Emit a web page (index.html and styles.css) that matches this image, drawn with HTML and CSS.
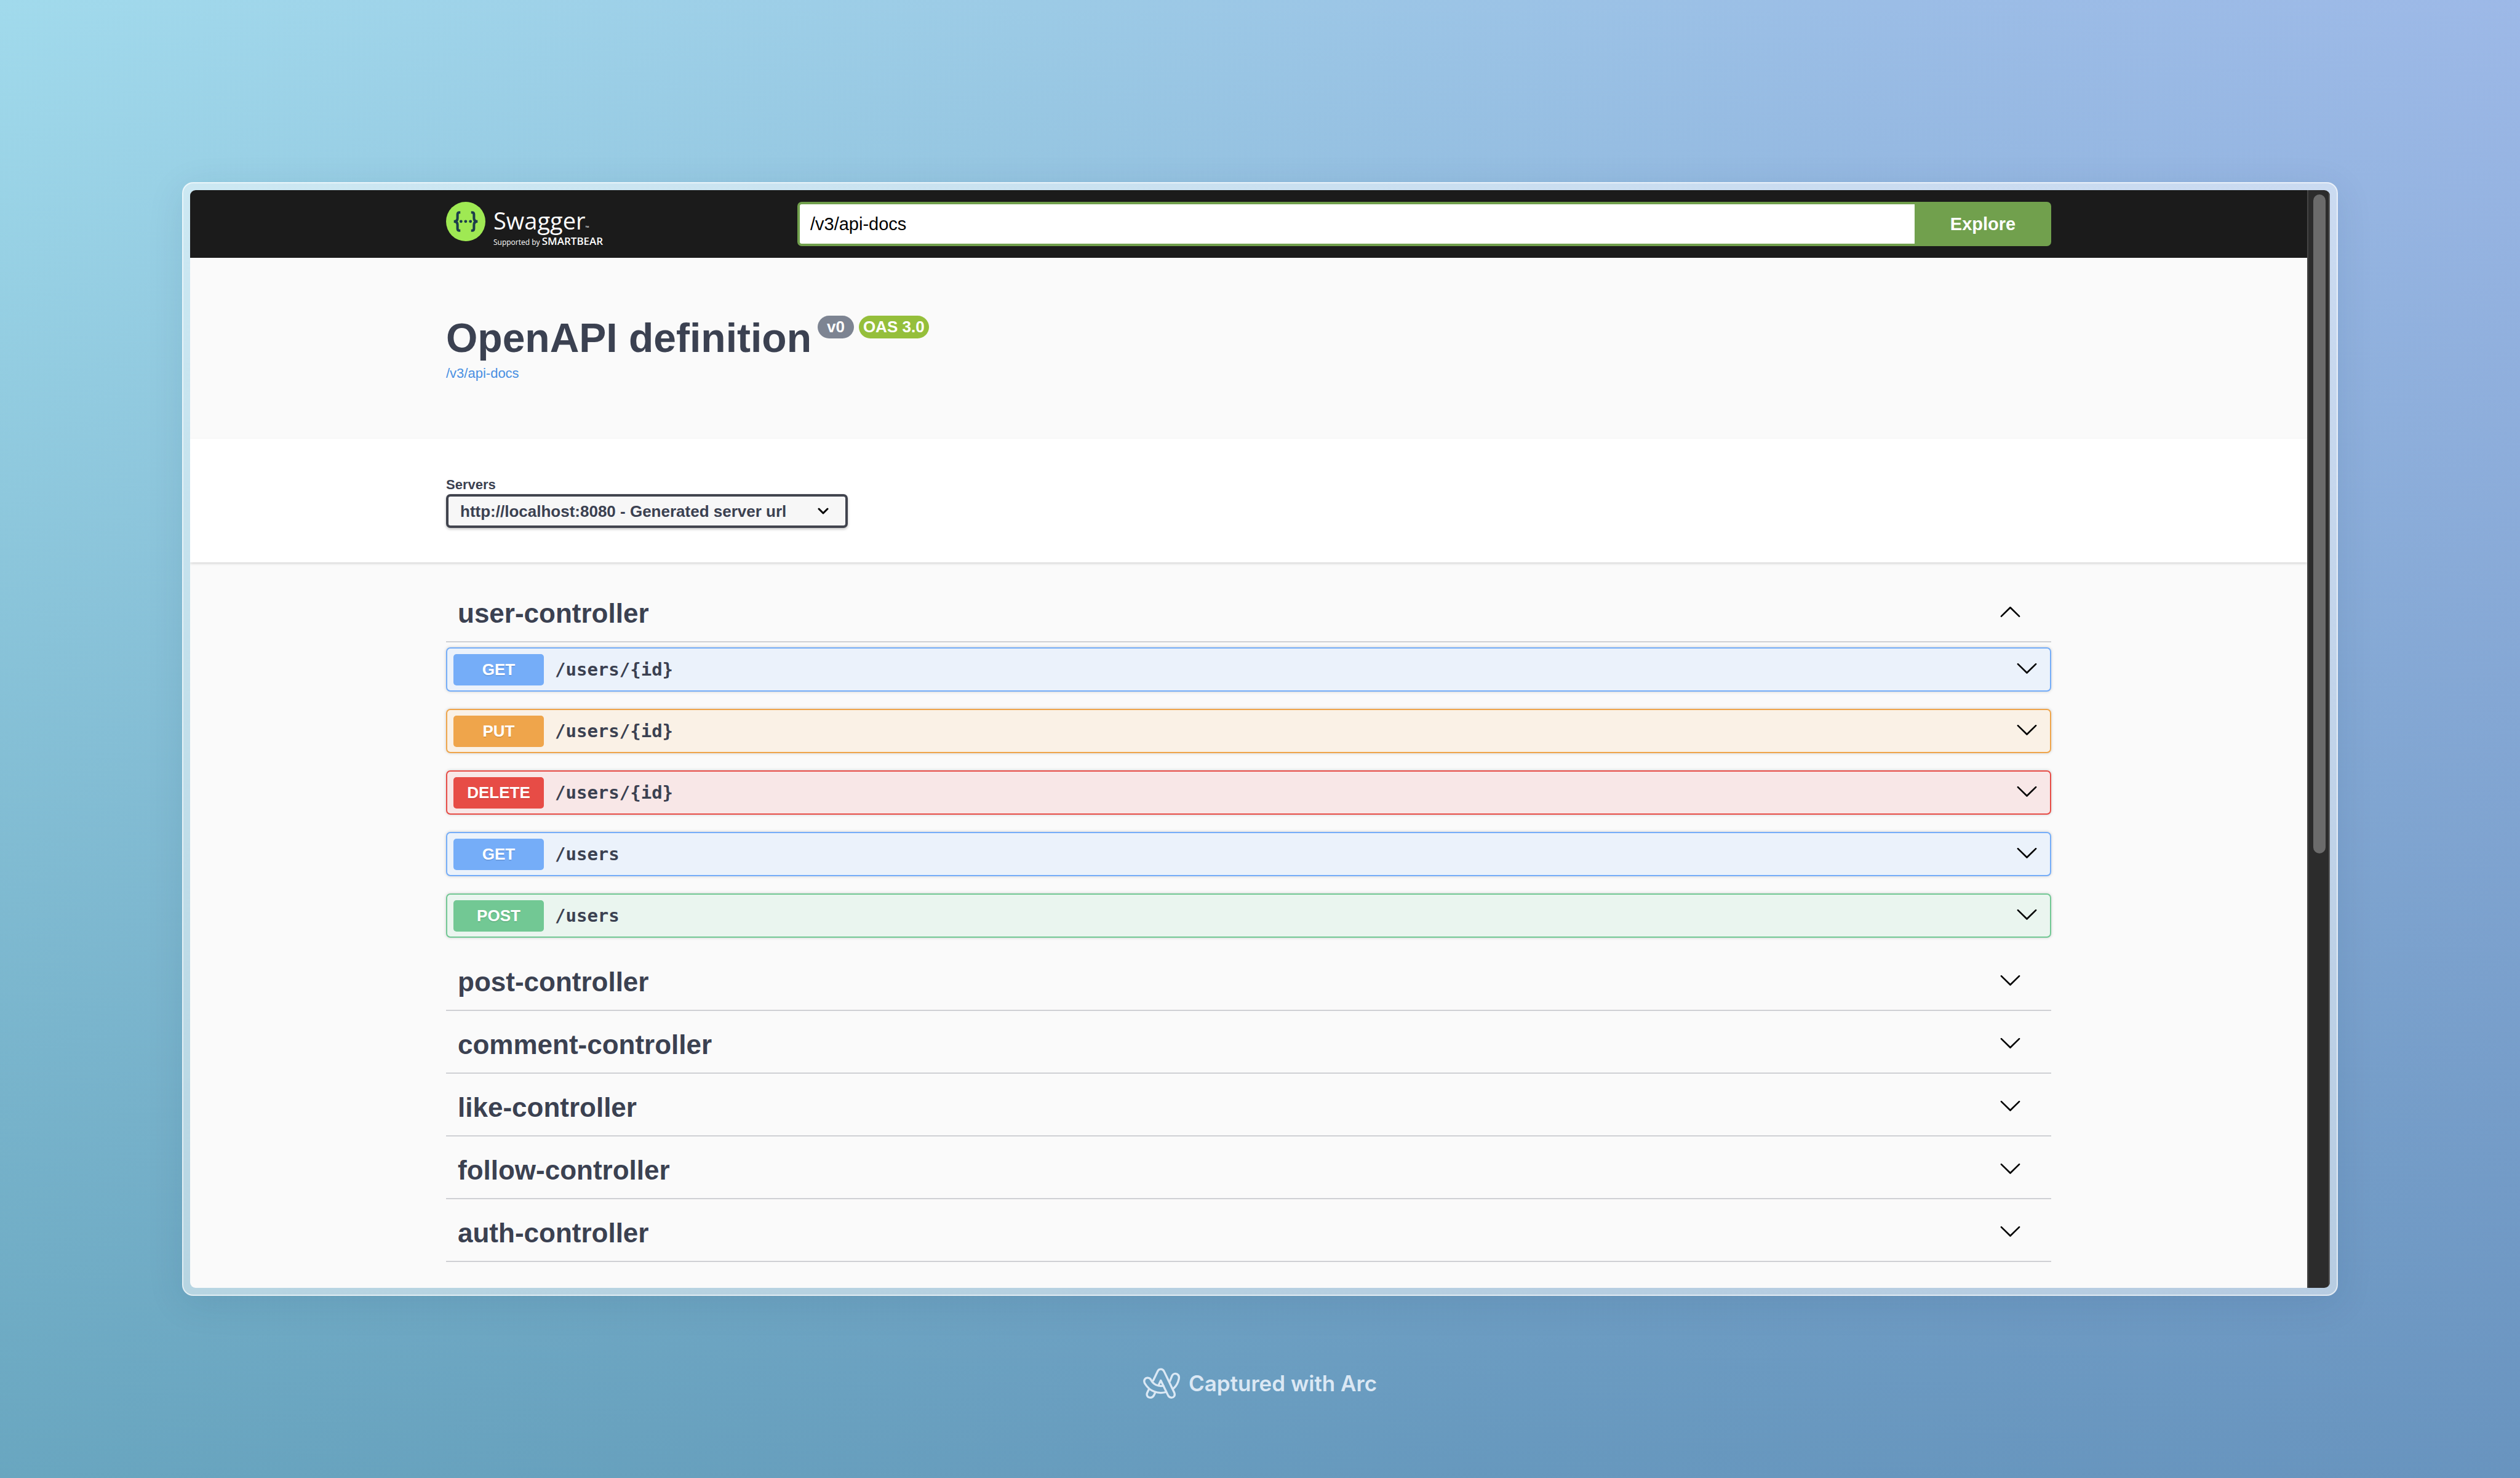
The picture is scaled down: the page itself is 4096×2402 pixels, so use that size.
FILE: index.html
```html
<!DOCTYPE html>
<html lang="en">
<head>
<meta charset="utf-8">
<title>OpenAPI definition</title>
<link rel="stylesheet" href="styles.css">
</head>
<body>
<svg class="sprite" aria-hidden="true">
  <symbol id="arrow-down" viewBox="0 0 20 20"><path d="M17.418 6.109c.272-.268.709-.268.979 0s.271.701 0 .969l-7.908 7.83c-.27.268-.707.268-.979 0l-7.908-7.83c-.27-.268-.27-.701 0-.969.271-.268.709-.268.979 0L10 13.25l7.418-7.141z"/></symbol>
  <symbol id="arrow-up" viewBox="0 0 20 20"><path d="M17.418 14.908c.272.268.709.268.979 0s.271-.701 0-.969l-7.908-7.83c-.27-.268-.707-.268-.979 0l-7.908 7.83c-.27.268-.27.701 0 .969.271.268.709.268.979 0L10 7.767l7.418 7.141z"/></symbol>
</svg>

<div class="window">
  <div class="viewport">
    <div class="page">
      <header class="topbar">
        <div class="wrapper topbar-row">
          <a class="logo" href="#">
            <svg class="logo-mark" viewBox="0 0 237 237" aria-hidden="true">
              <circle cx="118.500" cy="118.500" r="118.500" fill="#9fe953"/>
              <g fill="none" stroke="#1c3d4b" stroke-width="15">
                <path d="M86 64H81Q69 64 69 76V98Q69 118 47 118Q69 118 69 138V161Q69 173 81 173H86"/>
                <path d="M151 64H156Q168 64 168 76V98Q168 118 190 118Q168 118 168 138V161Q168 173 156 173H151"/>
              </g>
              <g fill="#1c3d4b"><circle cx="90" cy="118" r="9"/><circle cx="118" cy="118" r="9"/><circle cx="147" cy="118" r="9"/></g>
            </svg>
            <span class="logo-words">
              <span class="logo-name">Swagger<span class="logo-tm">™</span></span>
              <span class="logo-by">Supported by <b>SMARTBEAR</b></span>
            </span>
          </a>
          <form class="url-form">
            <input class="url-input" type="text" value="/v3/api-docs" aria-label="API definition URL">
            <button class="explore" type="button">Explore</button>
          </form>
        </div>
      </header>

      <section class="info">
        <div class="wrapper">
          <h1 class="title">OpenAPI definition
            <span class="badges"><span class="badge version">v0</span><span class="badge oas">OAS 3.0</span></span>
          </h1>
          <a class="spec-link" href="#">/v3/api-docs</a>
        </div>
      </section>

      <section class="servers">
        <div class="wrapper">
          <label class="servers-label" for="servers">Servers</label>
          <div class="select">
            <select id="servers"><option>http://localhost:8080 - Generated server url</option></select>
            <svg class="select-arrow" viewBox="0 0 18 12" aria-hidden="true"><path d="M2 2L9 9L16 2"/></svg>
          </div>
        </div>
      </section>

      <main class="wrapper tags">
        <section class="tag open">
          <h2 class="tag-head">user-controller<button class="toggle" type="button" aria-label="Collapse user-controller"><svg><use href="#arrow-up"/></svg></button></h2>
          <div class="ops">
            <div class="op get"><span class="method">GET</span><span class="path">/users/{id}</span><button class="toggle" type="button" aria-label="Expand operation"><svg><use href="#arrow-down"/></svg></button></div>
            <div class="op put"><span class="method">PUT</span><span class="path">/users/{id}</span><button class="toggle" type="button" aria-label="Expand operation"><svg><use href="#arrow-down"/></svg></button></div>
            <div class="op delete"><span class="method">DELETE</span><span class="path">/users/{id}</span><button class="toggle" type="button" aria-label="Expand operation"><svg><use href="#arrow-down"/></svg></button></div>
            <div class="op get"><span class="method">GET</span><span class="path">/users</span><button class="toggle" type="button" aria-label="Expand operation"><svg><use href="#arrow-down"/></svg></button></div>
            <div class="op post"><span class="method">POST</span><span class="path">/users</span><button class="toggle" type="button" aria-label="Expand operation"><svg><use href="#arrow-down"/></svg></button></div>
          </div>
        </section>
        <section class="tag"><h2 class="tag-head">post-controller<button class="toggle" type="button" aria-label="Expand post-controller"><svg><use href="#arrow-down"/></svg></button></h2></section>
        <section class="tag"><h2 class="tag-head">comment-controller<button class="toggle" type="button" aria-label="Expand comment-controller"><svg><use href="#arrow-down"/></svg></button></h2></section>
        <section class="tag"><h2 class="tag-head">like-controller<button class="toggle" type="button" aria-label="Expand like-controller"><svg><use href="#arrow-down"/></svg></button></h2></section>
        <section class="tag"><h2 class="tag-head">follow-controller<button class="toggle" type="button" aria-label="Expand follow-controller"><svg><use href="#arrow-down"/></svg></button></h2></section>
        <section class="tag"><h2 class="tag-head">auth-controller<button class="toggle" type="button" aria-label="Expand auth-controller"><svg><use href="#arrow-down"/></svg></button></h2></section>
      </main>
    </div>
    <div class="scrollbar"><div class="thumb"></div></div>
  </div>
</div>

<footer class="credit">
  <svg class="arc" viewBox="84 62 215 185" preserveAspectRatio="none" aria-hidden="true">
    <g fill="none" stroke="currentColor" stroke-width="12" stroke-linejoin="round" stroke-linecap="round">
      <path d="M143 138L168 84C174 66 198 64 206 83L266 212C272 228 264 240 250 241C240 241 234 236 230 229L187 138L175 164"/>
      <path d="M202 170C170 176 142 160 130 134C122 118 102 118 94 130C88 140 90 150 97 160C122 203 170 220 216 208"/>
      <path d="M240 142L253 109C258 98 270 94 281 99C292 105 295 115 292 129C288 150 278 170 262 185"/>
      <path d="M118 190L108 212C102 226 110 240 124 241C136 242 142 236 147 227L154 212"/>
    </g>
  </svg>
  <span>Captured with Arc</span>
</footer>
</body>
</html>
```
FILE: styles.css
```css
*, *::before, *::after { box-sizing: border-box; }

:root {
  --ink: #3b4151;
  --sans: "Liberation Sans", Arial, sans-serif;
}

body {
  margin: 0;
  min-height: 100vh;
  padding: 296px 296px 0;
  display: flex;
  flex-direction: column;
  font-family: var(--sans);
  color: var(--ink);
  background:
    linear-gradient(to bottom, rgba(20, 94, 126, 0), rgba(20, 94, 126, .39)),
    linear-gradient(105deg, #a1daec 0%, #9ccbe6 35%, #9bbde6 65%, #9eb6e8 100%);
}

.sprite { display: none; }

/* Browser window */
.window {
  flex: 1;
  display: flex;
  padding: 11px;
  border: 2px solid rgba(255, 255, 255, .6);
  border-radius: 18px;
  background: rgba(255, 255, 255, .5);
  box-shadow: 0 12px 60px rgba(20, 50, 90, .1);
}
.viewport {
  flex: 1;
  display: flex;
  overflow: hidden;
  border-radius: 9px;
  background: #fafafa;
}
.page { flex: 1; }

.scrollbar {
  width: 37px;
  padding: 7px 5px 7px 8px;
  background: #2c2c2c;
  border-left: 2px solid #454545;
  border-right: 2px solid #555;
}
.thumb {
  height: 60.5%;
  border-radius: 10px;
  background: #6b6b6b;
}

.wrapper {
  width: 100%;
  max-width: 2609px;
  margin: 0 auto;
}

/* Top bar */
.topbar { padding: 19px 0; background: #1b1b1b; }
.topbar-row { display: flex; justify-content: space-between; height: 72px; }
.logo { display: flex; gap: 13px; color: #fff; text-decoration: none; }
.logo-mark { width: 64px; height: 64px; }
.logo-words {
  display: flex;
  flex-direction: column;
  font-family: "Open Sans", "Noto Sans", sans-serif;
}
.logo-name { margin-top: 6px; font-size: 38px; line-height: 48px; font-weight: 400; }
.logo-tm { font-size: 8px; line-height: 8px; }
.logo-by { font-size: 12px; line-height: 20px; white-space: nowrap; }
.logo-by b { font-size: 17px; font-weight: 600; }

.url-form { flex: 0 1 2038px; display: flex; }
.url-input {
  flex: 1;
  min-width: 0;
  padding: 0 17px;
  border: 4px solid #71a04d;
  border-right: 0;
  border-radius: 7px 0 0 7px;
  background: #fff;
  font: 29px var(--sans);
  color: #000;
}
.explore {
  width: 222px;
  padding: 0;
  border: 0;
  border-radius: 0 7px 7px 0;
  background: #71a04d;
  font: bold 29px var(--sans);
  color: #fff;
}

/* API info */
.info { padding: 92px 0 93px; }
.title {
  display: flex;
  align-items: flex-start;
  gap: 10px;
  margin: 0 0 7px;
  font-size: 66px;
  line-height: 76px;
}
.badges { display: flex; gap: 8px; margin-top: 2px; }
.badge {
  border-radius: 19px;
  font-size: 26px;
  line-height: 37px;
  color: #fff;
}
.version { padding: 0 15px; background: #7d8492; }
.oas { padding: 0 7px; background: #95bf3b; }
.spec-link {
  display: block;
  font-size: 22px;
  line-height: 26px;
  color: #4990e2;
  text-decoration: none;
}

/* Servers */
.servers {
  padding: 62px 0 56px;
  background: #fff;
  box-shadow: 0 2px 4px rgba(0, 0, 0, .15);
}
.servers-label {
  display: block;
  margin-bottom: 2px;
  font-size: 22px;
  line-height: 26px;
  font-weight: bold;
}
.select { display: grid; width: 653px; align-items: center; }
.select > * { grid-area: 1 / 1; }
.select select {
  height: 55px;
  padding: 0 19px;
  appearance: none;
  border: 4px solid #41444e;
  border-radius: 7px;
  background: #f7f7f7;
  box-shadow: 0 2px 4px rgba(0, 0, 0, .25);
  font: bold 26px var(--sans);
  color: var(--ink);
}
.select-arrow {
  justify-self: end;
  width: 18px;
  height: 12px;
  margin-right: 31px;
  fill: none;
  stroke: #000;
  stroke-width: 3;
  stroke-linecap: round;
  stroke-linejoin: round;
  pointer-events: none;
}

/* Tags and operations */
.tags { padding-top: 37px; }
.tag { margin-bottom: 9px; }
.tag.open { margin-bottom: 26px; }
.tag-head {
  display: flex;
  align-items: center;
  justify-content: space-between;
  height: 93px;
  margin: 0;
  padding: 0 48px 0 19px;
  border-bottom: 2px solid #cfd0d4;
  font-size: 44px;
}
.toggle {
  padding: 0 0 6px;
  border: 0;
  background: none;
}
.toggle svg { display: block; width: 37px; height: 37px; }

.ops { display: flex; flex-direction: column; gap: 28px; margin-top: 8px; }
.op {
  --tone: #61affe;
  display: flex;
  align-items: center;
  gap: 18px;
  height: 72px;
  padding: 0 19px 0 10px;
  border: 2px solid var(--tone);
  border-radius: 7px;
  background: var(--tint);
  box-shadow: 0 0 5px rgba(0, 0, 0, .19);
}
.op .toggle { margin-left: auto; }
.method {
  width: 147px;
  border-radius: 5px;
  background: var(--tone);
  font-size: 26px;
  line-height: 51px;
  font-weight: bold;
  text-align: center;
  text-shadow: 0 2px 0 rgba(0, 0, 0, .1);
  color: #fff;
}
.path { font: bold 29px "DejaVu Sans Mono", monospace; }
.get { --tone: #75adf8; --tint: #ebf2fb; }
.put { --tone: #efa54b; --tint: #faf1e6; }
.delete { --tone: #e74c46; --tint: #f8e7e7; }
.post { --tone: #72c894; --tint: #eaf5ef; }

/* Capture credit */
.credit {
  height: 296px;
  padding-bottom: 12px;
  display: flex;
  align-items: center;
  justify-content: center;
  gap: 14px;
  font: 600 35px Inter, sans-serif;
  color: #dbe8f4;
}
.arc { width: 60px; height: 50px; }
```
